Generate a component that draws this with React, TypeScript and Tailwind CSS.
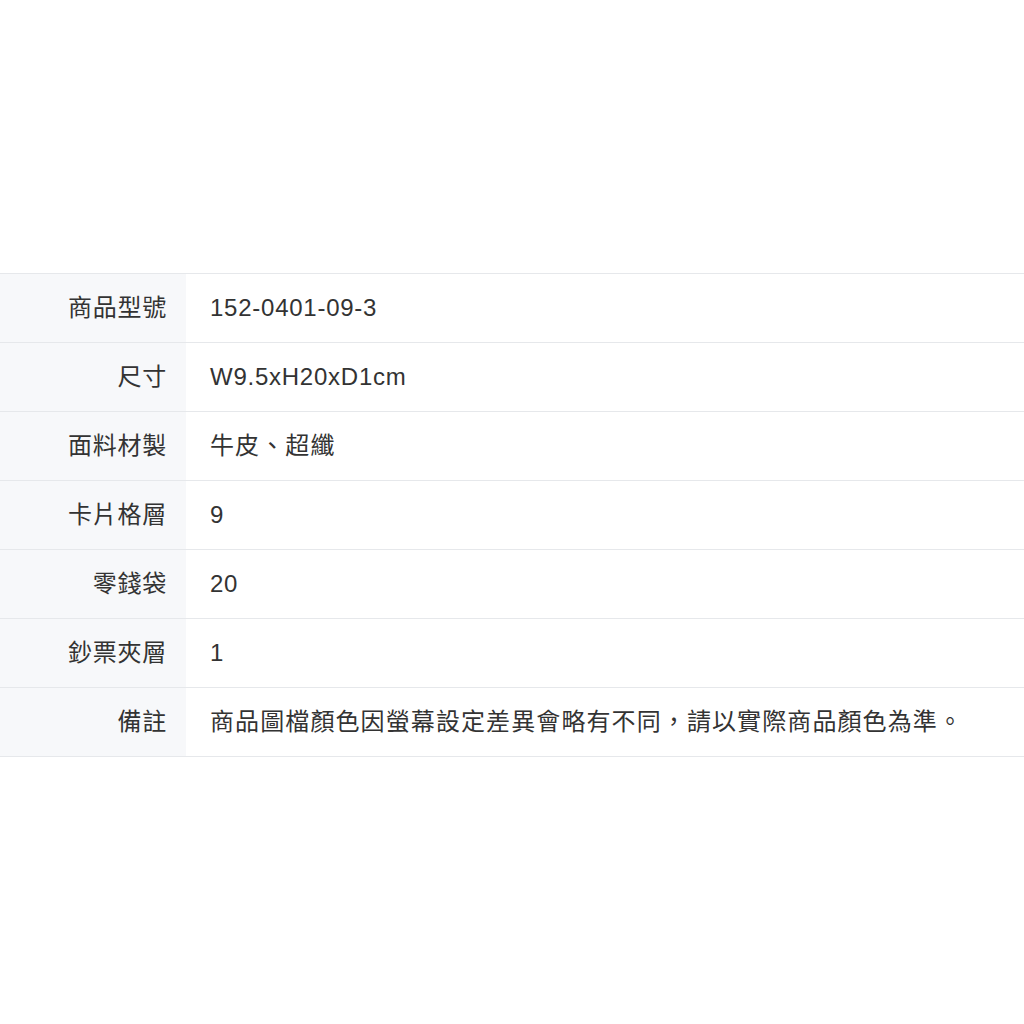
import React from "react";

const rows: [string, string, boolean][] = [
  ["商品型號", "152-0401-09-3", false],
  ["尺寸", "W9.5xH20xD1cm", false],
  ["面料材製", "牛皮、超纖", true],
  ["卡片格層", "9", false],
  ["零錢袋", "20", false],
  ["鈔票夾層", "1", false],
  ["備註", "商品圖檔顏色因螢幕設定差異會略有不同，請以實際商品顏色為準。", true],
];

export default function App() {
  return (
    <div
      className="w-[1024px] h-[1024px] bg-white pt-[273px] text-[#333] text-[24px] tracking-[0.75px]"
      style={{ fontFamily: '"Liberation Sans", "Noto Sans CJK TC", sans-serif' }}
    >
      <div className="border-t border-[#e6e8eb]">
        {rows.map(([k, v, cjk]) => (
          <div key={k} className="flex h-[69px] border-b border-[#e6e8eb]">
            <div className="w-[186px] shrink-0 bg-[#f7f8fa] flex items-center justify-end pr-[19px] leading-none">
              {k}
            </div>
            <div
              className={
                cjk
                  ? "flex-1 flex items-center pl-[24px] leading-none tracking-[1.1px]"
                  : "flex-1 flex items-center pl-[24px] leading-none"
              }
            >
              {v}
            </div>
          </div>
        ))}
      </div>
    </div>
  );
}
